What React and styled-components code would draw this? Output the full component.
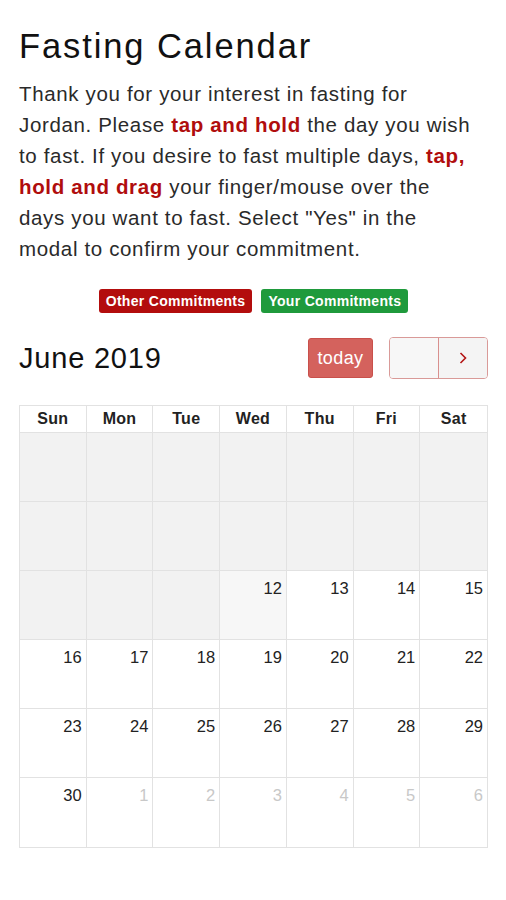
import React from "react";
import styled, { createGlobalStyle } from "styled-components";

const Global = createGlobalStyle`
  html, body { margin: 0; padding: 0; background: #fff; }
  body { font-family: "Liberation Sans", Arial, sans-serif; }
  * { box-sizing: border-box; }
`;

const Page = styled.div`
  padding: 28px 18px 40px 19px;
  width: 506px;
`;

const Title = styled.h1`
  margin: 0;
  font-size: 34.5px;
  line-height: 37px;
  font-weight: 400;
  letter-spacing: 1.9px;
  color: #111;
`;

const Intro = styled.p`
  margin: 13px 0 0;
  width: 469px;
  font-size: 20.5px;
  line-height: 31px;
  letter-spacing: 0.65px;
  white-space: nowrap;
  color: #2a2a2a;
`;

const Em = styled.strong`
  color: #b00d0d;
  font-weight: 700;
`;

const Legend = styled.div`
  display: flex;
  justify-content: center;
  gap: 9px;
  margin-top: 25px;
`;

const Badge = styled.span`
  display: inline-flex;
  align-items: center;
  height: 24px;
  padding: 0 7px;
  border-radius: 3px;
  font-size: 14px;
  font-weight: 700;
  color: #fff;
  letter-spacing: 0.3px;
  background: ${(p) => p.$bg};
`;

const Toolbar = styled.div`
  display: flex;
  align-items: center;
  margin-top: 24px;
  height: 42px;
`;

const Month = styled.h2`
  margin: 0;
  flex: 1;
  font-size: 29px;
  font-weight: 400;
  letter-spacing: 0.8px;
  color: #111;
`;

const TodayBtn = styled.button`
  width: 65px;
  height: 40px;
  border: 1px solid #c9504b;
  border-radius: 3px;
  background: #d4625d;
  color: #fff;
  font-family: inherit;
  font-size: 18px;
  letter-spacing: 0.4px;
  padding: 0;
  margin-right: 16px;
`;

const NavGroup = styled.div`
  display: flex;
  width: 99px;
  height: 42px;
  border: 1px solid #d99a98;
  border-radius: 4px;
  overflow: hidden;
`;

const NavBtn = styled.button`
  flex: 1;
  border: none;
  border-left: ${(p) => (p.$divider ? "1.5px solid #d9908e" : "none")};
  background: ${(p) => (p.$divider ? "#f4f4f4" : "#f7f7f7")};
  padding: 0;
  display: flex;
  align-items: center;
  justify-content: center;
  color: #b31414;
`;

const Calendar = styled.div`
  margin-top: 26px;
  width: 469px;
  border: 1px solid #e2e2e2;
  display: grid;
  grid-template-columns: repeat(7, 1fr);
  grid-auto-rows: 69px;
  grid-template-rows: 27px;
`;

const HeadCell = styled.div`
  display: flex;
  align-items: center;
  justify-content: center;
  font-size: 16px;
  font-weight: 700;
  letter-spacing: 0.3px;
  color: #222;
  border-right: 1px solid #e2e2e2;
  border-bottom: 1px solid #e2e2e2;
  &:nth-child(7n) { border-right: none; }
`;

const DayCell = styled.div`
  background: ${(p) => p.$bg};
  border-right: 1px solid #e2e2e2;
  border-bottom: 1px solid #e2e2e2;
  text-align: right;
  padding: 7px 4px 0 0;
  font-size: 16.5px;
  line-height: 20px;
  color: ${(p) => (p.$other ? "#c8c8c8" : "#222")};
  &:nth-child(7n) { border-right: none; }
  &:nth-last-child(-n + 7) { border-bottom: none; }
`;

const days = ["Sun", "Mon", "Tue", "Wed", "Thu", "Fri", "Sat"];

function buildCells() {
  const cells = [];
  for (let i = 0; i < 17; i++) cells.push({ n: "", bg: "#f2f2f2" });
  cells.push({ n: 12, bg: "#f7f7f7" });
  for (let d = 13; d <= 30; d++) cells.push({ n: d, bg: "#fff" });
  for (let d = 1; d <= 6; d++) cells.push({ n: d, bg: "#fff", other: true });
  return cells;
}

export default function App() {
  const cells = buildCells();
  return (
    <Page>
      <Global />
      <Title>Fasting Calendar</Title>
      <Intro>
        Thank you for your interest in fasting for
        <br />
        Jordan. Please <Em>tap and hold</Em> the day you wish
        <br />
        to fast. If you desire to fast multiple days, <Em>tap,</Em>
        <br />
        <Em>hold and drag</Em> your finger/mouse over the
        <br />
        days you want to fast. Select "Yes" in the
        <br />
        modal to confirm your commitment.
      </Intro>
      <Legend>
        <Badge $bg="#b30d0d">Other Commitments</Badge>
        <Badge $bg="#1f9a3c">Your Commitments</Badge>
      </Legend>
      <Toolbar>
        <Month>June 2019</Month>
        <TodayBtn>today</TodayBtn>
        <NavGroup>
          <NavBtn aria-label="previous" />
          <NavBtn $divider aria-label="next">
            <svg width="12" height="14" viewBox="0 0 12 14">
              <path d="M3.5 2 L8.5 7 L3.5 12" fill="none" stroke="#b31414" strokeWidth="1.6" />
            </svg>
          </NavBtn>
        </NavGroup>
      </Toolbar>
      <Calendar>
        {days.map((d) => (
          <HeadCell key={d}>{d}</HeadCell>
        ))}
        {cells.map((c, i) => (
          <DayCell key={i} $bg={c.bg} $other={c.other}>
            {c.n}
          </DayCell>
        ))}
      </Calendar>
    </Page>
  );
}
